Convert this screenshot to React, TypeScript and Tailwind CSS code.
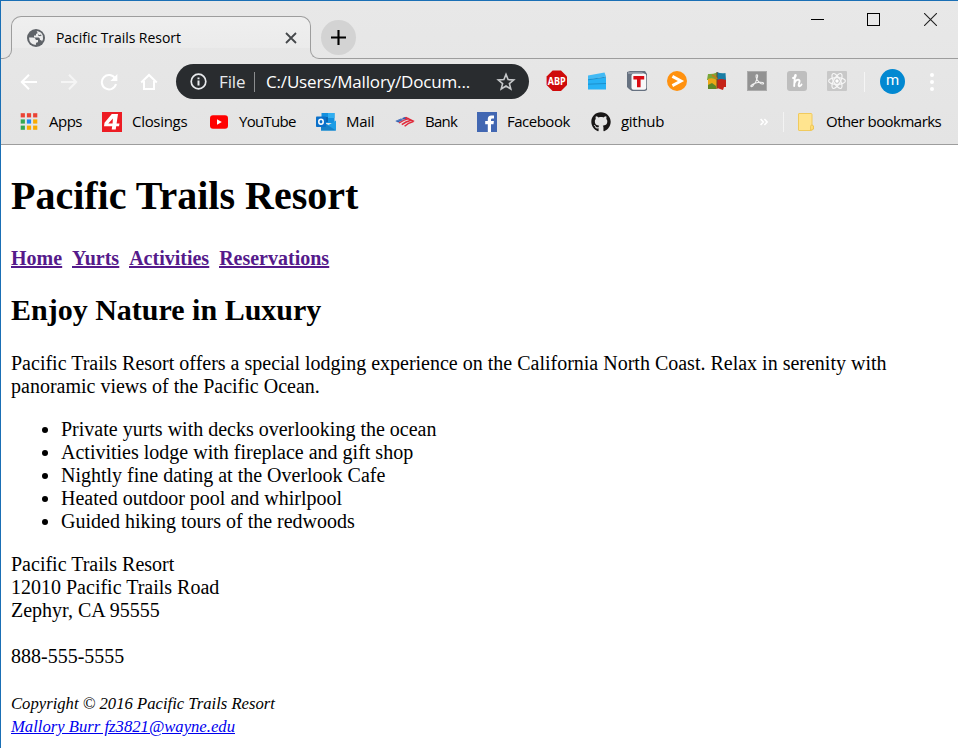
import type { ReactNode } from "react";
import { FaGithub } from "react-icons/fa";

function Slot({ children }: { children: ReactNode }) {
  return <div className="flex w-10 shrink-0 items-center justify-center">{children}</div>;
}

function Globe() {
  return (
    <svg width="18" height="18" viewBox="0 0 18 18">
      <circle cx="9" cy="9" r="9" fill="#5f6368" />
      <path d="M2 8.6 L5.8 8.4 Q8.6 8.4 8.8 11 H11 V13.2 Q9.4 13 9 14.2 L8.8 16 Q2.2 15.6 2 8.6Z" fill="#ededed" />
      <path d="M9.6 2 Q14 2.4 15.8 6.4 Q16.6 9.6 15 12.4 Q14.6 11 13 11 Q13 8.8 11.6 8.6 H7 V6.6 H9 V4.8 H10.2 Q11 3.8 9.6 2Z" fill="#ededed" />
      <path d="M11 5 Q12 6.8 13.6 5.4 L14.8 6.2 L13 7.2 L11 6.6Z" fill="#5f6368" />
    </svg>
  );
}

function TabStrip() {
  return (
    <div className="flex h-[58px] items-end">
      <div className="relative z-10 flex h-[42px] items-start">
        <div className="h-[12px] w-[11px] self-end rounded-br-[9px] border-r border-b border-[#9d9d9d]" />
        <div className="-mt-px -ml-px flex h-[32px] w-[300px] rounded-t-[10px] border border-b-0 border-[#9d9d9d] bg-[#eeeeee] bg-gradient-to-b from-[#efefef] to-[#ebebeb]">
          <div className="flex h-[41px] w-full items-center pr-[13px] pl-[15px]">
            <Globe />
            <span className="ml-[11px] flex-1 text-[14px] tracking-[-0.05px] whitespace-nowrap">Pacific Trails Resort</span>
            <svg width="12" height="12" viewBox="0 0 12 12" stroke="#45484b" strokeWidth="1.8">
              <path d="M1 1L11 11M11 1L1 11" />
            </svg>
          </div>
        </div>
        <div className="-ml-px h-[12px] w-[11px] self-end rounded-bl-[9px] border-b border-l border-[#9d9d9d]" />
      </div>
      <div className="flex h-full flex-1 items-start justify-between border-b border-[#9d9d9d]">
        <div className="mt-[19px] flex h-[35px] w-[35px] items-center justify-center rounded-full bg-[#d3d3d3]">
          <svg width="15" height="15" viewBox="0 0 15 15" stroke="#000" strokeWidth="2.1">
            <path d="M7.5 0V15M0 7.5H15" />
          </svg>
        </div>
        <div className="mt-[12px] mr-[21px] flex items-start">
          <div className="mt-[6px] h-px w-[13px] bg-black" />
          <div className="ml-[43px] h-[13px] w-[13px] border border-black" />
          <svg className="ml-[44px]" width="13" height="13" viewBox="0 0 13 13" stroke="#222" strokeWidth="1.1">
            <path d="M0 0L13 13M13 0L0 13" />
          </svg>
        </div>
      </div>
    </div>
  );
}

function Extensions() {
  return (
    <>
      <Slot>
        <svg width="22" height="22" viewBox="0 0 22 22">
          <path d="M6.6 .6H15L21 6.6V15L15 21H6.6L.6 15V6.6Z" fill="#cf0a0a" />
          <text x="10.8" y="14.6" fontSize="10.5" fontWeight="700" fill="#fff" textAnchor="middle" textLength="18" lengthAdjust="spacingAndGlyphs">ABP</text>
        </svg>
      </Slot>
      <Slot>
        <svg width="20" height="20" viewBox="0 0 20 20">
          <path d="M1 4.5L17.5 1.5L19 5.4L1 8.5Z" fill="#42baf4" />
          <path d="M1 8.3L19 6.5V18.5H1Z" fill="#28b2f5" />
          <path d="M1 8.8L19 6.1M1 13.2L19 12.5" stroke="#1c90cd" fill="none" />
        </svg>
      </Slot>
      <Slot>
        <svg width="22" height="22" viewBox="0 0 22 22">
          <path d="M1 2L4 1H19L21 4V20L19 21H6L3 19L1 17Z" fill="#667180" />
          <path d="M2 3H16L20 5" stroke="#bac0c8" fill="none" />
          <rect x="5.5" y="3.8" width="14.7" height="16" rx="2" fill="#f8f8f9" />
          <path d="M7.4 6H18.2V9.4H14.6V17.3H11V9.4H7.4Z" fill="#d90b13" />
        </svg>
      </Slot>
      <Slot>
        <svg width="20" height="20" viewBox="0 0 20 20">
          <circle cx="10" cy="10" r="10" fill="#ff910f" />
          <path d="M5.4 5.4L14 10L5.4 14.6" fill="none" stroke="#fff" strokeWidth="2.9" />
        </svg>
      </Slot>
      <Slot>
        <svg width="20" height="20" viewBox="0 0 20 20">
          <path d="M1 3Q5 3.5 10 1.5V9H0Z" fill="#79a73a" />
          <path d="M10 1Q14 3 18.5 2L19 9L10 10Z" fill="#187da4" />
          <path d="M1 8Q5 6 10 9V18Q6 16 1 18Z" fill="#eda717" />
          <path d="M10 9Q14 7 19 9V16H17L16 19L10 17Z" fill="#c52318" />
          <path d="M1 14L5 12L9 15V18H1Z" fill="#5d8728" />
          <path d="M10 1V18" stroke="#704526" />
          <path d="M5 4Q8 5 10 8" stroke="#c07d1c" strokeWidth="2" fill="none" />
        </svg>
      </Slot>
      <Slot>
        <svg width="20" height="20" viewBox="0 0 20 20">
          <rect x=".5" y=".5" width="19" height="19" fill="#929292" stroke="#ababab" />
          <path d="M9.3 4Q11 3 10.5 6Q9.4 11 5.8 15Q3.8 16.5 3.8 14.8Q6.5 12 12.5 11.3Q17 11 16.5 12.8Q13.5 14 10 8.5Q8.6 5.5 9.3 4Z" fill="none" stroke="#f0f0f0" strokeWidth="1.1" />
        </svg>
      </Slot>
      <Slot>
        <svg width="20" height="20" viewBox="0 0 20 20">
          <rect width="20" height="20" rx="3" fill="#bebebe" />
          <path d="M6 7Q8.5 6.8 8.8 4.4Q8.4 3 7.8 5.5L7.2 15M7.4 12Q9 8.6 11.2 8.6Q13.3 8.8 12.2 11.8Q11 15.5 12.5 15.2Q14 15 14.5 13.5" fill="none" stroke="#fff" strokeWidth="1.9" strokeLinecap="round" />
        </svg>
      </Slot>
      <Slot>
        <svg width="20" height="20" viewBox="0 0 20 20">
          <rect width="20" height="20" rx="1" fill="#c8c8c8" />
          <g fill="none" stroke="#f6f6f6" strokeWidth="1.2">
            <ellipse cx="10" cy="10" rx="8.4" ry="3.3" />
            <ellipse cx="10" cy="10" rx="8.4" ry="3.3" transform="rotate(60 10 10)" />
            <ellipse cx="10" cy="10" rx="8.4" ry="3.3" transform="rotate(120 10 10)" />
          </g>
          <circle cx="10" cy="10" r="1.7" fill="#fff" />
        </svg>
      </Slot>
    </>
  );
}

function Toolbar() {
  return (
    <div className="flex h-[45px] items-center pl-[8px]">
      <Slot>
        <svg width="18" height="18" viewBox="0 0 18 18" fill="none" stroke="#fff" strokeWidth="2">
          <path d="M17 9H2.5M9 1.8L1.8 9L9 16.2" />
        </svg>
      </Slot>
      <Slot>
        <svg width="18" height="18" viewBox="0 0 18 18" fill="none" stroke="#f5f5f5" strokeWidth="2">
          <path d="M1 9H15.5M9 1.8L16.2 9L9 16.2" />
        </svg>
      </Slot>
      <Slot>
        <svg width="18" height="18" viewBox="0 0 18 18" fill="none" stroke="#fff" strokeWidth="2">
          <path d="M15.2 5.5A7.2 7.2 0 1 0 16 11" />
          <path d="M17.4 1V8H10.4Z" fill="#fff" stroke="none" />
        </svg>
      </Slot>
      <Slot>
        <svg width="18" height="18" viewBox="0 0 18 18" fill="none" stroke="#fff" strokeWidth="2">
          <path d="M1.2 9.5L9 2L16.8 9.5M4 8V16H14V8" />
        </svg>
      </Slot>
      <div className="ml-[7px] flex h-[35px] w-[353px] shrink-0 items-center rounded-full bg-[#292c2f] pr-[13px] pl-[14px] text-[17px] text-[#e8eaed]">
        <svg width="17" height="17" viewBox="0 0 17 17" fill="none" stroke="#e8eaed" strokeWidth="1.7">
          <circle cx="8.5" cy="8.5" r="7.3" />
          <path d="M8.5 7.4V12.6M8.5 4.4V6.2" strokeWidth="2" />
        </svg>
        <span className="ml-[12px] w-[35px] tracking-[-0.1px]">File</span>
        <span className="h-[20px] w-px bg-[#8b8d8f]" />
        <span className="ml-[11px] flex-1 tracking-[-0.17px] whitespace-nowrap text-white">C:/Users/Mallory/Docum...</span>
        <svg width="20" height="20" viewBox="0 0 20 20" fill="none" stroke="#c6c8ca" strokeWidth="1.6">
          <path d="M10 2.4L12.1 7.6L17.7 8L13.4 11.6L14.8 17L10 14L5.2 17L6.6 11.6L2.3 8L7.9 7.6Z" />
        </svg>
      </div>
      <div className="mb-px ml-[8px] flex">
        <Extensions />
      </div>
      <div className="ml-[7px] h-[20px] w-px bg-[#f5f5f5]" />
      <div className="ml-[15px] flex h-[25px] w-[25px] items-center justify-center rounded-full bg-[#0288d1] pb-[2px] font-['Roboto',sans-serif] text-[15px] text-white">m</div>
      <div className="ml-[25px] flex flex-col gap-[3px]">
        <span className="h-[4px] w-[4px] rounded-full bg-white" />
        <span className="h-[4px] w-[4px] rounded-full bg-white" />
        <span className="h-[4px] w-[4px] rounded-full bg-white" />
      </div>
    </div>
  );
}

function AppsIcon() {
  const dots = ["#ea4335", "#ea4335", "#ea4335", "#34a853", "#1e88f5", "#f9ab00", "#34a853", "#f9ab00", "#f9ab00"];
  return (
    <svg width="20" height="20" viewBox="0 0 20 20">
      {dots.map((c, i) => (
        <rect key={i} x={1.7 + (i % 3) * 6.2} y={1.2 + Math.floor(i / 3) * 6.2} width="4.2" height="4.2" fill={c} />
      ))}
    </svg>
  );
}

function ChannelIcon() {
  return (
    <svg width="20" height="20" viewBox="0 0 20 20">
      <rect width="20" height="20" fill="#ed1c24" />
      <path d="M9.8 2H16L14.6 11.5H17.5L17 14.2H14.2L13.7 17.6H9.7L10.2 14.2H2L2.5 10.8ZM10.9 6.5L6.3 11.5H10.6Z" fill="#fff" fillRule="evenodd" />
    </svg>
  );
}

function YouTubeIcon() {
  return (
    <svg width="20" height="20" viewBox="0 0 20 20">
      <rect x="1" y="3.2" width="18" height="13.6" rx="3" fill="#f00" />
      <path d="M8 7.2L12.8 10L8 12.8Z" fill="#fff" />
    </svg>
  );
}

function OutlookIcon() {
  return (
    <svg width="20" height="20" viewBox="0 0 20 20">
      <rect x="5.5" y="1" width="13" height="10" fill="#1490df" />
      <path d="M12 1H18.5V6H12Z" fill="#32aef0" />
      <path d="M5.5 5H12V10H5.5Z" fill="#0865b0" />
      <path d="M5 9L12.5 13L20 8.5V18.5H5Z" fill="#1d9de6" />
      <path d="M5 9L20 18.5H5Z" fill="#1581c8" />
      <rect y="4.5" width="10" height="10.5" rx=".8" fill="#0b70c9" />
      <ellipse cx="5" cy="9.7" rx="2.2" ry="2.5" fill="none" stroke="#fff" strokeWidth="1.5" />
    </svg>
  );
}

function BankIcon() {
  return (
    <svg width="20" height="20" viewBox="0 0 20 20" fill="none">
      <path d="M.3 9L6 6.6L8.6 8L3.2 10.6ZM6.6 6.3L10 5L12.4 6.3L9.4 7.6Z" fill="#2d5bae" />
      <path d="M11 4.8L19.7 9L18 9.9L9.6 5.5Z" fill="#df2535" />
      <path d="M4 11Q9 7.4 14 6.6M6.8 12.6Q10.8 9.4 16 8.2M9.6 14.2Q13 11 18.4 9.6" stroke="#e12a3b" strokeWidth="1.5" />
      <path d="M2 8.9L8 6.8M4.2 9.8L10.2 7" stroke="#8fa8d6" strokeWidth=".5" />
    </svg>
  );
}

function FacebookIcon() {
  return (
    <svg width="20" height="20" viewBox="0 0 20 20">
      <rect width="20" height="20" fill="#4267b2" />
      <path d="M10.8 20V12.2H8.2V9H10.8V7Q10.8 3.6 14.3 3.5L17 3.6V6.5H15.2Q14 6.5 14 7.8V9H16.9L16.5 12.2H14V20Z" fill="#fff" />
    </svg>
  );
}

function Bookmark({ icon, label, className }: { icon: ReactNode; label: string; className: string }) {
  return (
    <div className={`flex shrink-0 items-center gap-[10px] whitespace-nowrap ${className}`}>
      <span className="shrink-0">{icon}</span>
      <span>{label}</span>
    </div>
  );
}

function BookmarksBar() {
  return (
    <div className="flex h-[41px] items-center border-b border-[#9d9d9d] pb-[5px] pl-[18px] text-[15px]">
      <Bookmark icon={<AppsIcon />} label="Apps" className="w-[83px] tracking-[-0.5px]" />
      <Bookmark icon={<ChannelIcon />} label="Closings" className="w-[107px] tracking-[-0.3px]" />
      <Bookmark icon={<YouTubeIcon />} label="YouTube" className="w-[107px] tracking-[-0.7px]" />
      <Bookmark icon={<OutlookIcon />} label="Mail" className="w-[79px] tracking-[-0.3px]" />
      <Bookmark icon={<BankIcon />} label="Bank" className="w-[82px] tracking-[-0.7px]" />
      <Bookmark icon={<FacebookIcon />} label="Facebook" className="w-[114px] tracking-[-0.5px]" />
      <Bookmark icon={<FaGithub size={20} color="#191717" />} label="github" className="w-[169px] tracking-[-0.3px]" />
      <svg width="8" height="8" viewBox="0 0 8 8" fill="none" stroke="#fff" strokeWidth="1.6">
        <path d="M.6 1L3.3 4L.6 7M4.4 1L7.1 4L4.4 7" />
      </svg>
      <div className="ml-[15px] h-[20px] w-px bg-[#f3f3f3]" />
      <svg className="ml-[14px] shrink-0" width="16" height="18" viewBox="0 0 16 18">
        <path d="M1 .5H13Q14 .5 14 1.5V12L15.5 13V16L13.5 17.5H1Q.5 17.5 .5 17V1Q.5 .5 1 .5Z" fill="#ffe48f" stroke="#f0ca5e" />
        <path d="M12.5 17.2V13.5Q12.5 12 14 12L15.5 13V16Z" fill="#ffdc73" stroke="#e9c052" strokeWidth=".7" />
      </svg>
      <span className="ml-[12px] tracking-[-0.53px] whitespace-nowrap">Other bookmarks</span>
    </div>
  );
}

function Page() {
  return (
    <main className="flex-1 pl-[10px] font-['Liberation_Serif',serif] text-[20px] leading-[23px]">
      <h1 className="mt-[28px] text-[40px] leading-[46px] font-bold">Pacific Trails Resort</h1>
      <nav className="mt-[28px] flex gap-[10px] font-bold text-[#551a8b] underline">
        <a>Home</a>
        <a>Yurts</a>
        <a>Activities</a>
        <a>Reservations</a>
      </nav>
      <h2 className="mt-[23px] text-[30px] leading-[34px] font-bold">Enjoy Nature in Luxury</h2>
      <p className="mt-[25px]">
        Pacific Trails Resort offers a special lodging experience on the California North Coast. Relax in serenity with
        <br />
        panoramic views of the Pacific Ocean.
      </p>
      <ul className="mt-[20px] list-disc pl-[50px]">
        <li>Private yurts with decks overlooking the ocean</li>
        <li>Activities lodge with fireplace and gift shop</li>
        <li>Nightly fine dating at the Overlook Cafe</li>
        <li>Heated outdoor pool and whirlpool</li>
        <li>Guided hiking tours of the redwoods</li>
      </ul>
      <address className="mt-[20px] not-italic">
        Pacific Trails Resort
        <br />
        12010 Pacific Trails Road
        <br />
        Zephyr, CA 95555
        <br />
        <br />
        888-555-5555
      </address>
      <footer className="mt-[24px] text-[16.67px] italic">
        Copyright © 2016 Pacific Trails Resort
        <br />
        <a className="text-[#0000ee] underline">Mallory Burr fz3821@wayne.edu</a>
      </footer>
    </main>
  );
}

export default function App() {
  return (
    <div className="flex h-[748px] w-[958px] flex-col overflow-hidden border-t border-l border-[#1a6fb5] bg-white text-black">
      <header className="h-[144px] shrink-0 bg-[#e6e6e6] bg-gradient-to-b from-[#e8e8e8] to-[#e4e4e4] font-['Open_Sans',sans-serif]">
        <TabStrip />
        <Toolbar />
        <BookmarksBar />
      </header>
      <Page />
    </div>
  );
}
